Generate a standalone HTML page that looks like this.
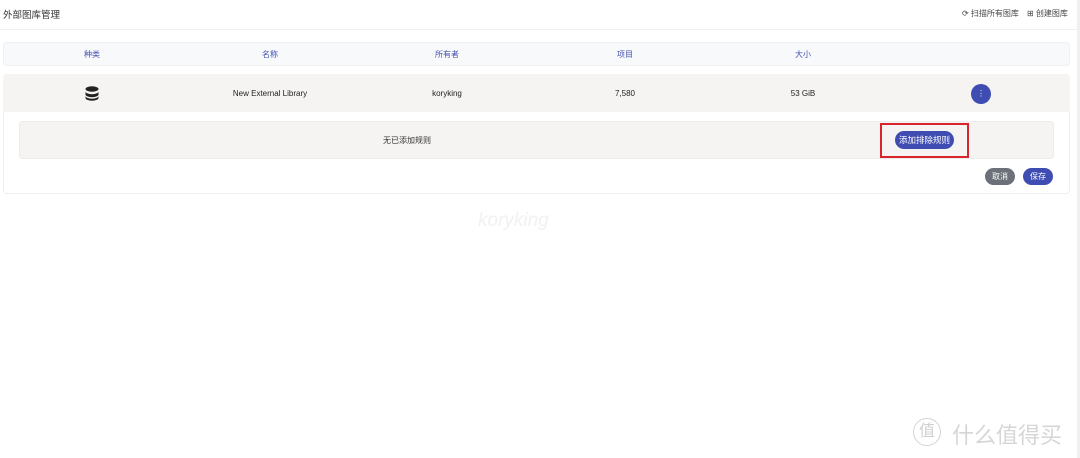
<!DOCTYPE html>
<html><head><meta charset="utf-8"><style>
*{box-sizing:border-box;margin:0;padding:0}
body{width:1080px;height:458px;background:#fff;font-family:"Liberation Sans","Noto Sans CJK SC",sans-serif;position:relative;overflow:hidden;color:#222}
.a{position:absolute}
.t{font-size:8px;text-align:center}
.hd{color:#4250af}
</style></head><body>
<div class="a" style="left:3px;top:7px;font-size:9.5px;color:#333">外部图库管理</div>
<div class="a" style="left:962px;top:8px;font-size:8px;color:#444">⟳ 扫描所有图库</div>
<div class="a" style="left:1027px;top:8px;font-size:8px;color:#444">⊞ 创建图库</div>
<div class="a" style="left:0;top:29px;width:1078px;height:1px;background:#f0f0f0"></div>
<div class="a" style="left:1077px;top:0;width:3px;height:458px;background:#f0f0f0"></div>
<div class="a" style="left:3px;top:42px;width:1067px;height:24px;background:#f8f9fb;border:1px solid #eef0f3;border-radius:4px"></div>
<div class="a t hd" style="left:52px;top:49px;width:80px">种类</div>
<div class="a t hd" style="left:230px;top:49px;width:80px">名称</div>
<div class="a t hd" style="left:407px;top:49px;width:80px">所有者</div>
<div class="a t hd" style="left:585px;top:49px;width:80px">项目</div>
<div class="a t hd" style="left:763px;top:49px;width:80px">大小</div>
<div class="a" style="left:3px;top:74px;width:1067px;height:120px;border:1px solid #eee;border-radius:4px"></div>
<div class="a" style="left:3px;top:74px;width:1067px;height:38px;background:#f5f4f2;border-radius:4px 4px 0 0"></div>
<svg class="a" style="left:85px;top:86px" width="14" height="15" viewBox="0 0 14 15"><ellipse cx="7" cy="3" rx="6.5" ry="2.7" fill="#222"/><path d="M0.5 5.5a6.5 2.7 0 0 0 13 0v3a6.5 2.7 0 0 1-13 0z" fill="#222"/><path d="M0.5 10a6.5 2.7 0 0 0 13 0v2a6.5 2.7 0 0 1-13 0z" fill="#222"/></svg>
<div class="a t" style="left:210px;top:89px;width:120px">New External Library</div>
<div class="a t" style="left:407px;top:89px;width:80px">koryking</div>
<div class="a t" style="left:585px;top:89px;width:80px">7,580</div>
<div class="a t" style="left:763px;top:89px;width:80px">53 GiB</div>
<div class="a" style="left:971px;top:84px;width:20px;height:20px;border-radius:50%;background:#3f4db3;color:#fff;font-size:8px;text-align:center;line-height:20px">⋮</div>
<div class="a" style="left:19px;top:121px;width:1035px;height:38px;background:#f5f4f2;border:1px solid #ececec;border-radius:3px"></div>
<div class="a t" style="left:360px;top:135px;width:94px;color:#333">无已添加规则</div>
<div class="a" style="left:880px;top:123px;width:89px;height:35px;border:2px solid #d9252c"></div>
<div class="a" style="left:895px;top:131px;width:59px;height:18px;border-radius:9px;background:#3f4db3;color:#fff;font-size:8.5px;text-align:center;line-height:18px">添加排除规则</div>
<div class="a" style="left:985px;top:168px;width:30px;height:17px;border-radius:9px;background:#6b7079;color:#fff;font-size:8px;text-align:center;line-height:17px">取消</div>
<div class="a" style="left:1023px;top:168px;width:30px;height:17px;border-radius:9px;background:#3f4db3;color:#fff;font-size:8px;text-align:center;line-height:17px">保存</div>
<div class="a" style="left:478px;top:210px;font-size:19px;font-style:italic;color:#f1f1f1">koryking</div>
<div class="a" style="left:913px;top:418px;width:28px;height:28px;border:1.5px solid #d4d4d4;border-radius:50%;color:#d0d0d0;font-size:16px;text-align:center;line-height:25px">值</div>
<div class="a" style="left:952px;top:418px;font-size:22px;color:#d6d6d6">什么值得买</div>
</body></html>
